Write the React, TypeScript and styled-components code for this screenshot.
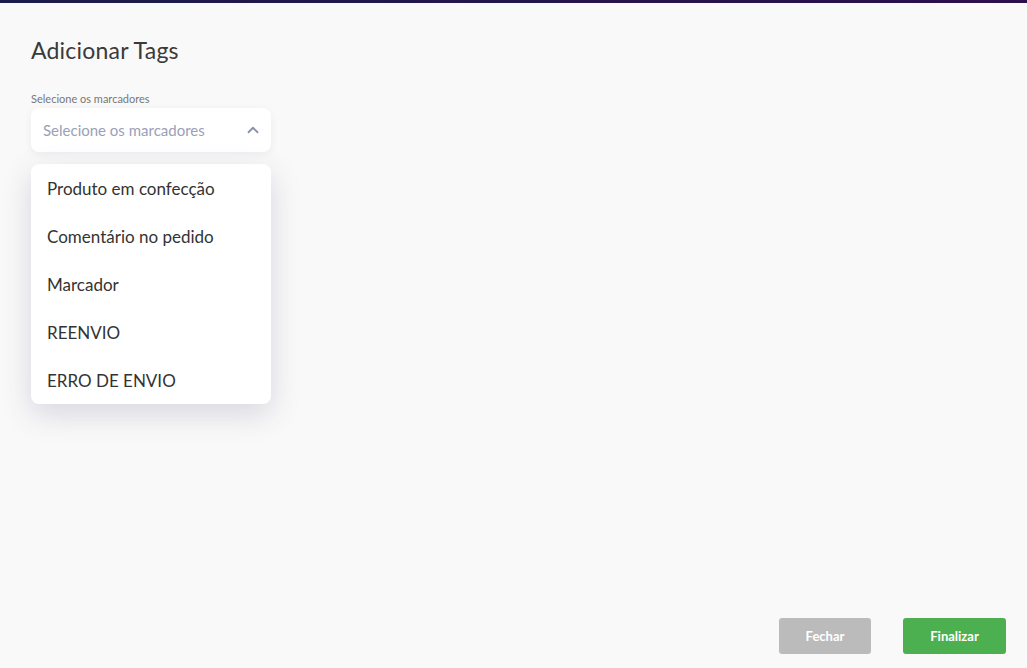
import styled, { createGlobalStyle } from 'styled-components'

const GlobalStyle = createGlobalStyle`
  html, body {
    margin: 0;
    padding: 0;
    background: #f9f9f9;
  }
  body {
    font-family: Lato, 'Noto Sans', sans-serif;
  }
`

const Page = styled.div`
  height: 668px;
  display: flex;
  flex-direction: column;
  background: #f9f9f9;
`

const TopBar = styled.div`
  height: 3px;
  background: linear-gradient(90deg, #1b1c4b 0%, #2c0f4a 100%);
`

const Content = styled.div`
  flex: 1;
  padding: 33px 31px 0;
`

const Title = styled.h1`
  margin: 0;
  font-size: 23px;
  font-weight: 400;
  color: #3a3a3a;
  line-height: 28px;
  letter-spacing: 0.2px;
`

const Field = styled.div`
  margin-top: 29px;
  width: 240px;
  position: relative;
`

const Label = styled.div`
  font-size: 11px;
  color: #777;
  line-height: 12px;
  margin-bottom: 3px;
`

const SelectBox = styled.div`
  height: 44px;
  background: #fff;
  border-radius: 8px;
  box-shadow: 0 2px 8px rgba(40, 40, 80, 0.06);
  display: flex;
  align-items: center;
  justify-content: space-between;
  padding: 0 9px 0 12px;
  box-sizing: border-box;
`

const Placeholder = styled.span`
  font-size: 15px;
  color: #9aa0b8;
`

const Menu = styled.ul`
  list-style: none;
  margin: 12px 0 0;
  padding: 0;
  background: #fff;
  border-radius: 8px;
  box-shadow: 0 10px 30px rgba(60, 60, 110, 0.18);
`

const Item = styled.li`
  height: 48px;
  display: flex;
  align-items: center;
  font-size: 17px;
  color: #333;
  padding: 0 16px;
`

const Footer = styled.div`
  display: flex;
  justify-content: flex-end;
  gap: 32px;
  padding: 0 21px 14px 0;
`

const Button = styled.button<{ $color: string; $width: number }>`
  width: ${(p) => p.$width}px;
  height: 36px;
  border: none;
  border-radius: 3px;
  background: ${(p) => p.$color};
  color: #fff;
  font-family: Lato, 'Noto Sans', sans-serif;
  font-size: 13px;
  font-weight: 700;
`

const items = ['Produto em confecção', 'Comentário no pedido', 'Marcador', 'REENVIO', 'ERRO DE ENVIO']

export default function App() {
  return (
    <Page>
      <GlobalStyle />
      <TopBar />
      <Content>
        <Title>Adicionar Tags</Title>
        <Field>
          <Label>Selecione os marcadores</Label>
          <SelectBox>
            <Placeholder>Selecione os marcadores</Placeholder>
            <svg width="18" height="18" viewBox="0 0 24 24" fill="none" stroke="#8a90a8" strokeWidth="2.4" strokeLinecap="round" strokeLinejoin="round">
              <polyline points="6 15 12 9 18 15" />
            </svg>
          </SelectBox>
          <Menu>
            {items.map((it) => (
              <Item key={it}>{it}</Item>
            ))}
          </Menu>
        </Field>
      </Content>
      <Footer>
        <Button $color="#bbbbbb" $width={92}>Fechar</Button>
        <Button $color="#4caf50" $width={103}>Finalizar</Button>
      </Footer>
    </Page>
  )
}
